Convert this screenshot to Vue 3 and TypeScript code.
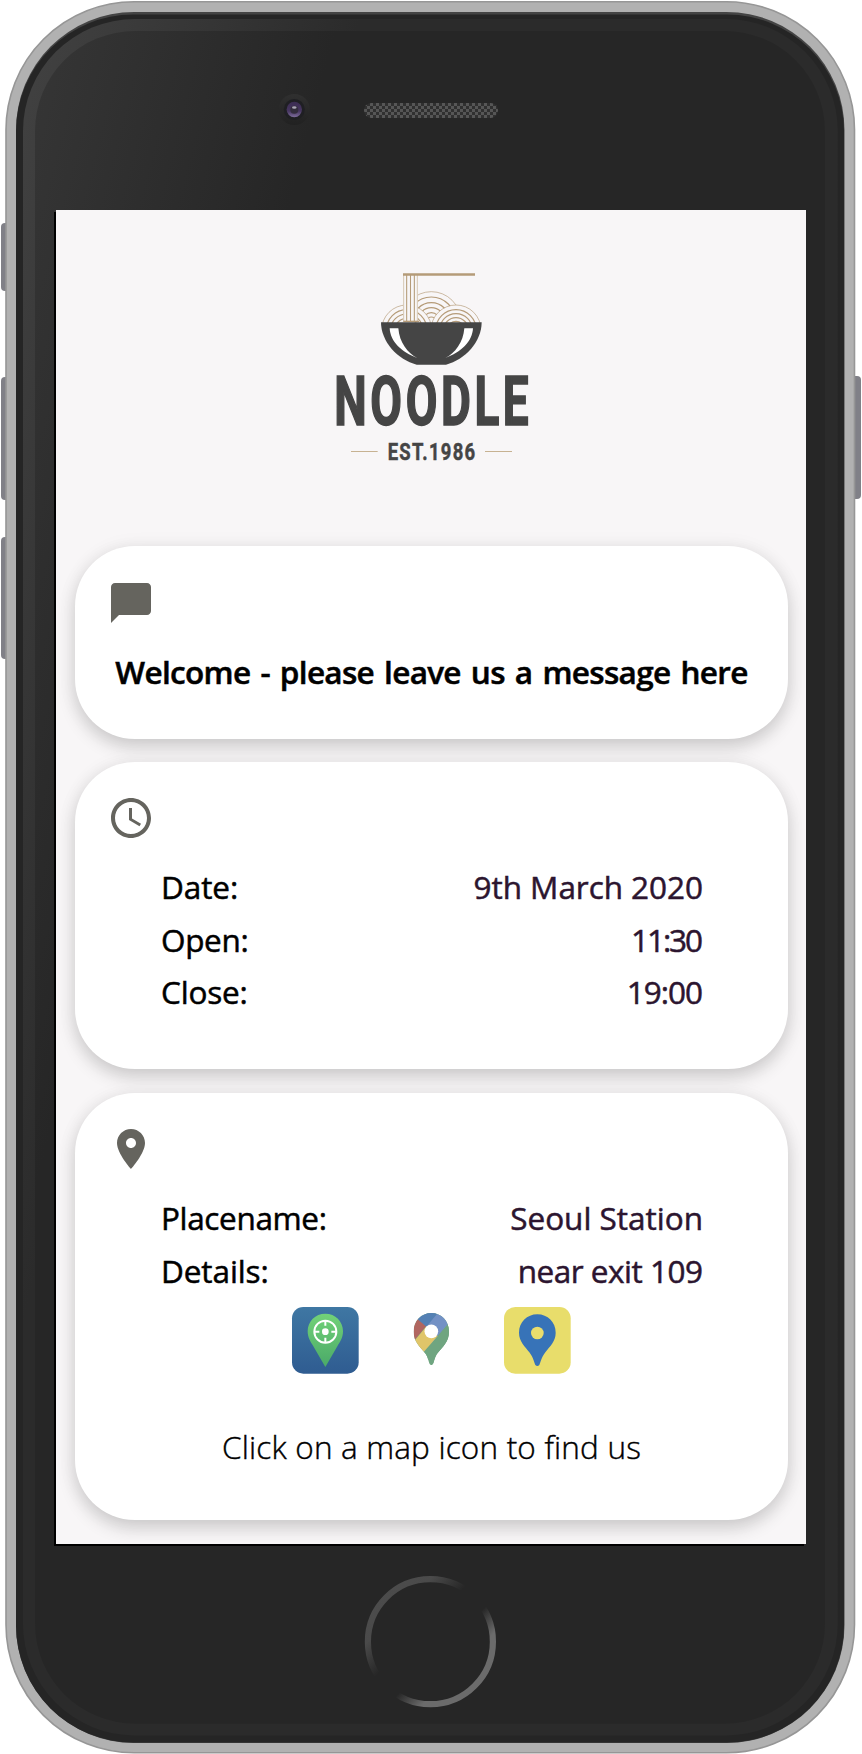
<script setup lang="ts">
interface Row { label: string; value: string; labelTracking: number; valueTracking: number }

const hours: Row[] = [
  { label: 'Date:', value: '9th March 2020', labelTracking: -0.1, valueTracking: -0.05 },
  { label: 'Open:', value: '11:30', labelTracking: -0.35, valueTracking: -2.1 },
  { label: 'Close:', value: '19:00', labelTracking: -0.2, valueTracking: -1 },
]
const place: Row[] = [
  { label: 'Placename:', value: 'Seoul Station', labelTracking: -0.35, valueTracking: 0 },
  { label: 'Details:', value: 'near exit 109', labelTracking: -0.1, valueTracking: -0.48 },
]
const labelStyle = (r: Row) => ({ letterSpacing: `${r.labelTracking}px` })
const valueStyle = (r: Row) => ({ letterSpacing: `${r.valueTracking}px`, marginRight: `${-r.valueTracking}px` })
</script>

<template>
  <div class="phone">
    <svg class="frame" viewBox="0 0 862 1754" aria-hidden="true">
      <defs>
        <linearGradient id="face" gradientUnits="userSpaceOnUse" x1="30" y1="100" x2="300" y2="170">
          <stop offset="0" stop-color="#353535" /><stop offset="1" stop-color="#262626" />
        </linearGradient>
        <linearGradient id="rim" gradientUnits="userSpaceOnUse" x1="30" y1="100" x2="320" y2="175">
          <stop offset="0" stop-color="#404040" /><stop offset="1" stop-color="#2b2b2b" />
        </linearGradient>
        <linearGradient id="home" x1="0" y1="0" x2="1" y2="1">
          <stop offset=".1" stop-color="#4c4c4c" /><stop offset=".25" stop-color="#4a4a4a" />
          <stop offset=".42" stop-color="#262626" /><stop offset=".58" stop-color="#262626" />
          <stop offset=".72" stop-color="#6b6b6b" /><stop offset="1" stop-color="#6b6b6b" />
        </linearGradient>
        <linearGradient id="lens" x1="0" y1="0" x2="0" y2="1">
          <stop offset="0" stop-color="#3b2c52" /><stop offset=".6" stop-color="#473660" /><stop offset="1" stop-color="#7d6c9b" />
        </linearGradient>
        <linearGradient id="bezel" x1="0" y1="0" x2="0" y2="1">
          <stop offset="0" stop-color="#303030" /><stop offset="1" stop-color="#212121" />
        </linearGradient>
        <pattern id="mesh" width="6" height="6" x="364" y="103" patternUnits="userSpaceOnUse">
          <rect width="6" height="6" fill="#303030" />
          <rect width="3" height="3" fill="#565656" /><rect x="3" y="3" width="3" height="3" fill="#565656" />
        </pattern>
      </defs>
      <g fill="#808087">
        <rect x="1" y="223" width="12" height="68" rx="4" />
        <rect x="1" y="377" width="12" height="123" rx="4" />
        <rect x="1" y="537" width="12" height="122" rx="4" />
        <rect x="849" y="376" width="12" height="123" rx="4" />
      </g>
      <rect x="6" y="1.8" width="848.5" height="1751" rx="128" fill="#b1b1b1" stroke="#969696" stroke-width="1.6" />
      <rect x="16" y="12" width="828.5" height="1731" rx="118" fill="#444" />
      <rect x="16" y="14.5" width="828" height="1728" rx="117" fill="#252525" />
      <rect x="23" y="19" width="814.7" height="1716.5" rx="112" fill="url(#rim)" />
      <rect x="35" y="31" width="790" height="1692.7" rx="100" fill="url(#face)" />
      <circle cx="294.3" cy="109.5" r="15.5" fill="url(#bezel)" />
      <circle cx="294.3" cy="109.5" r="10.5" fill="#1f1f23" />
      <circle cx="294.3" cy="109.5" r="7.7" fill="url(#lens)" />
      <circle cx="294.3" cy="109.8" r="4" fill="#332d3d" />
      <ellipse cx="294.3" cy="107.5" rx="2.3" ry="1.2" fill="#aaa5b5" />
      <rect x="364" y="103" width="134" height="15" rx="7.5" fill="url(#mesh)" />
      <circle cx="430.4" cy="1641.7" r="62.5" fill="none" stroke="url(#home)" stroke-width="6.2" />
      <rect x="54" y="212" width="750" height="1334" fill="#000" />
    </svg>

    <main class="screen">
      <svg class="logo" viewBox="0 0 660 630" role="img" aria-label="Noodle">
        <defs><clipPath id="rimline"><rect x="0" y="0" width="660" height="189" /></clipPath></defs>
        <g clip-path="url(#rimline)" fill="#f8f6f7" stroke="#b59b78" stroke-width="3.6">
          <circle cx="334" cy="183" r="88" stroke-width="2" />
          <circle v-for="r in [72, 55, 40, 25, 12]" :key="'m' + r" cx="334" cy="183" :r="r" />
          <circle cx="260" cy="210" r="75" stroke-width="2" />
          <circle v-for="r in [61, 48, 35]" :key="'l' + r" cx="260" cy="210" :r="r" />
          <circle cx="408" cy="210" r="75" stroke-width="2" />
          <circle v-for="r in [61, 49, 37, 26]" :key="'r' + r" cx="408" cy="210" :r="r" />
        </g>
        <rect x="250" y="44" width="43" height="143" fill="#f8f6f7" />
        <path d="M251 44V186M292 44V186" stroke="#d6c8b4" stroke-width="3" />
        <path d="M260 44V186M271.500 44V186M283 44V186" stroke="#b59b78" stroke-width="3.200" />
        <path d="M250 184H297" stroke="#b59b78" stroke-width="4" />
        <path d="M249 43.500H465" stroke="#b59b78" stroke-width="7" />
        <path d="M183 187H485C485 245 435 300 378 314H290C233 300 183 245 183 187Z" fill="#454545" />
        <path d="M209 205H235C238 247 263 280 292 294C245 277 211 245 209 205Z" fill="#fff" />
        <path d="M459 205H433C430 247 405 280 376 294C423 277 457 245 459 205Z" fill="#fff" />
        <g class="brand">
          <text class="name" x="43" y="495.500" textLength="594" lengthAdjust="spacingAndGlyphs">NOODLE</text>
          <text class="est" x="203" y="600" textLength="266" lengthAdjust="spacingAndGlyphs">EST.1986</text>
        </g>
        <path d="M93 574.500H173M495 574.500H576" stroke="#c7b292" stroke-width="3" />
      </svg>

      <section class="card message">
        <svg class="icon" viewBox="0 0 24 24"><path d="M20 2H4c-1.100 0-2 .9-2 2v18l4-4h14c1.100 0 2-.9 2-2V4c0-1.100-.9-2-2-2z" /></svg>
        <h1 class="welcome">Welcome - please leave us a message here</h1>
      </section>

      <section class="card hours">
        <svg class="icon" viewBox="0 0 24 24"><path d="M11.990 2C6.470 2 2 6.480 2 12s4.470 10 9.990 10C17.520 22 22 17.520 22 12S17.520 2 11.990 2zM12 20c-4.420 0-8-3.580-8-8s3.580-8 8-8 8 3.580 8 8-3.580 8-8 8z" /><path d="M12.500 7H11v6l5.250 3.150.75-1.230-4.500-2.670z" /></svg>
        <dl class="rows">
          <div v-for="r in hours" :key="r.label" class="row">
            <dt :style="labelStyle(r)">{{ r.label }}</dt>
            <dd :style="valueStyle(r)">{{ r.value }}</dd>
          </div>
        </dl>
      </section>

      <section class="card place">
        <svg class="icon" viewBox="0 0 24 24"><path d="M12 2C8.130 2 5 5.130 5 9c0 5.250 7 13 7 13s7-7.750 7-13c0-3.870-3.130-7-7-7zm0 9.500c-1.380 0-2.500-1.120-2.500-2.500s1.120-2.500 2.500-2.500 2.500 1.120 2.500 2.500-1.120 2.500-2.500 2.500z" /></svg>
        <dl class="rows">
          <div v-for="r in place" :key="r.label" class="row">
            <dt :style="labelStyle(r)">{{ r.label }}</dt>
            <dd :style="valueStyle(r)">{{ r.value }}</dd>
          </div>
        </dl>
        <div class="maps">
          <svg viewBox="0 0 200 200">
            <defs>
              <linearGradient id="blue" x1="0" y1="0" x2="0" y2="1"><stop offset="0" stop-color="#3f77a3" /><stop offset="1" stop-color="#2f5c91" /></linearGradient>
              <linearGradient id="green" x1="0" y1="0" x2="0" y2="1"><stop offset="0" stop-color="#72d278" /><stop offset="1" stop-color="#4aa968" /></linearGradient>
            </defs>
            <rect width="200" height="200" rx="34" fill="url(#blue)" />
            <path d="M100 20C70 20 47 43 47 73C47 92 56 105 64 118L100 180L136 118C144 105 153 92 153 73C153 43 130 20 100 20Z" fill="url(#green)" />
            <g fill="none" stroke="#fff" stroke-width="6"><circle cx="100" cy="74" r="33" /><path d="M100 41V56M100 92V107M67 74H82M118 74H133" /></g>
            <circle cx="100" cy="74" r="10" fill="#fff" />
          </svg>
          <svg viewBox="0 0 200 200">
            <defs><clipPath id="pin"><path d="M100 18C70 18 47 42 47 74C47 104 66 119 81 138C91 151 91 163 95 171Q100 177 105 171C109 163 109 151 119 138C134 119 153 104 153 74C153 42 130 18 100 18Z" /></clipPath></defs>
            <g clip-path="url(#pin)">
              <rect x="40" y="10" width="120" height="170" fill="#6fa580" />
              <path d="M82 57L122 15L165 35L100 110Z" fill="#7391c5" />
              <path d="M158 42L70 143L130 185L170 120Z" fill="#6fa580" />
              <path d="M55 31L85 57L45 105L30 80Z" fill="#b16660" />
              <path d="M86 57L48 103L77 135L119 87Z" fill="#e0c569" />
              <path d="M58 36L85 59L122 15L90 5Z" fill="#5480b4" />
            </g>
            <circle cx="100" cy="73" r="20.500" fill="#fff" />
          </svg>
          <svg viewBox="0 0 200 200">
            <rect width="200" height="200" rx="34" fill="#e8dd6b" />
            <path d="M100 22C69 22 45 46 45 77C45 104 63 118 76 136C88 152 90 165 94 174Q100 180 106 174C110 165 112 152 124 136C137 118 155 104 155 77C155 46 131 22 100 22Z" fill="#3773b8" />
            <circle cx="100" cy="78" r="19" fill="#eadd6d" />
          </svg>
        </div>
        <p class="hint">Click on a map icon to find us</p>
      </section>
    </main>
  </div>
</template>

<style>
body { background: #fff; }
</style>
<style scoped>
.phone {
  position: relative;
  box-sizing: border-box;
  width: 862px;
  height: 1754px;
  padding: 210px 56px 0;
  font-family: "Open Sans", "Noto Sans", sans-serif;
  font-size: 31.5px;
  line-height: 52.6px;
  overflow: hidden;
}
.frame { position: absolute; inset: 0; width: 862px; height: 1754px; }
.screen {
  position: relative;
  box-sizing: border-box;
  width: 750px;
  height: 1334px;
  padding: 50px 18px 0 19px;
  display: flex;
  flex-direction: column;
  background: #f8f6f7;
  overflow: hidden;
}
.logo { width: 220px; height: 210px; margin: 0 0 76px 245px; flex: none; overflow: visible; }
.brand { font-family: Roboto, sans-serif; font-weight: 700; fill: #454545; stroke: #454545; }
.name { font-size: 204px; letter-spacing: 16px; stroke-width: 5px; }
.est { font-size: 74px; letter-spacing: 5px; stroke-width: 1.500px; }
.card {
  box-sizing: border-box;
  flex: none;
  margin-bottom: 23.500px;
  padding: 32px;
  border-radius: 60px;
  background: #fff;
  box-shadow: 0 8px 18px rgba(0, 0, 0, .16), 0 1px 20px rgba(0, 0, 0, .06);
}
.message { height: 192.500px; padding-top: 33px; }
.hours { height: 307px; }
.place { height: 427.500px; margin-bottom: 0; }
.icon { display: block; width: 48px; height: 48px; fill: #65645e; }
.welcome {
  margin: 19px -32px 0;
  text-align: center;
  white-space: nowrap;
  font-size: 31.500px;
  font-weight: 600;
  letter-spacing: -.68px;
  word-spacing: 2.500px;
  -webkit-text-stroke: .5px currentColor;
}
.rows { margin: 19px 53px 0 54px; }
.place .rows { margin-top: 19.500px; }
.row { display: flex; justify-content: space-between; white-space: nowrap; }
dt, dd { margin: 0; -webkit-text-stroke: .5px currentColor; }
dt { color: #000; }
dd { color: #2c152f; }
.maps { display: flex; justify-content: center; gap: 39.500px; margin-top: 9.500px; }
.maps svg { display: block; width: 66.700px; height: 66.700px; overflow: visible; }
.hint {
  margin: 47.500px 0 0;
  text-align: center;
  font-weight: 300;
  letter-spacing: .18px;
  -webkit-text-stroke: .4px currentColor;
}
</style>
